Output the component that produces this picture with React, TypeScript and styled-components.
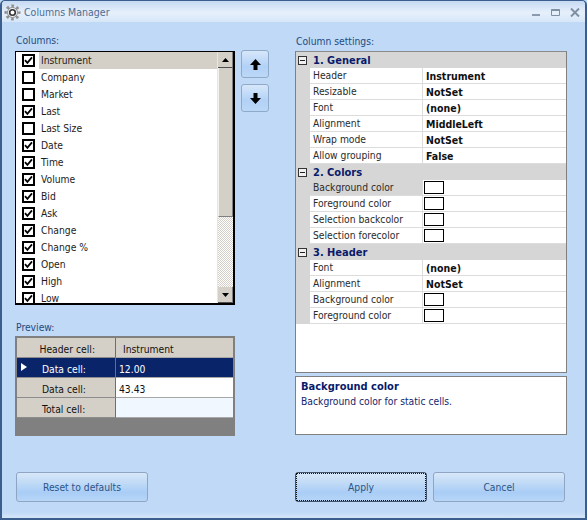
import styled, { createGlobalStyle } from 'styled-components';

const GlobalStyle = createGlobalStyle`
  html, body {
    margin: 0;
    padding: 0;
    background: #bfd9f6;
  }
  * {
    box-sizing: border-box;
  }
`;

const Window = styled.div`
  width: 587px;
  height: 520px;
  display: flex;
  flex-direction: column;
  overflow: hidden;
  background: #bfd9f6;
  border: 1px solid #3a5f8f;
  border-width: 1px 2px 2px 2px;
  border-radius: 5px 5px 0 0;
  font-family: 'DejaVu Sans Condensed', 'Liberation Sans', Arial, sans-serif;
  font-stretch: condensed;
  font-size: 10.25px;
  color: #000;
`;

const TitleBar = styled.div`
  height: 21px;
  flex: none;
  display: flex;
  align-items: center;
  padding: 1px 4px 0 2px;
  gap: 3px;
  background: linear-gradient(#c6daf2, #e6f0fb 55%, #d6e6f8);
  color: #4c6c92;
  font-size: 10.5px;
`;

const TitleText = styled.span`
  flex: 1;
`;

const WindowButtons = styled.div`
  display: flex;
  align-items: center;
  gap: 10px;
  margin-right: 1px;
`;

const Body = styled.div`
  flex: 1;
  display: grid;
  grid-template-columns: 220px 48px 272px;
  column-gap: 6px;
  grid-template-rows: 402px 1fr;
  padding: 12px 0 0 13px;
  background: linear-gradient(#bfd9f6 calc(100% - 6px), #d5e5f9);
`;

const LeftColumn = styled.div`
  display: flex;
  flex-direction: column;
`;

const RightColumn = styled.div`
  display: flex;
  flex-direction: column;
  padding-top: 1px;
`;

const FieldLabel = styled.div`
  height: 16px;
  padding-left: 1px;
  color: #1f4a80;
  line-height: 13px;
`;

const ColumnsLabel = styled(FieldLabel)`
  height: 17px;
`;

const ListBox = styled.div`
  height: 254px;
  display: flex;
  background: #fff;
  border: 1px solid #000;
  border-width: 1px 2px 2px 1px;
  overflow: hidden;
`;

const ListItems = styled.div`
  flex: 1;
  overflow: hidden;
`;

const ListRow = styled.div`
  height: 17px;
  display: flex;
  align-items: center;
  padding-left: 6px;
`;

const CheckBox = styled.span`
  width: 13px;
  height: 13px;
  flex: none;
  border: 2px solid #000;
  display: flex;
  align-items: center;
  justify-content: center;
  background: #fff;
`;

const ListLabel = styled.span<{ $selected?: boolean }>`
  flex: 1;
  height: 17px;
  line-height: 17px;
  margin-left: 4px;
  padding-left: 2px;
  color: #1c1c1c;
  background: ${(p) => (p.$selected ? '#d4d0c8' : 'transparent')};
`;

const ScrollBar = styled.div`
  width: 16px;
  flex: none;
  display: flex;
  flex-direction: column;
  border-left: 1px solid #e8e6e0;
`;

const ScrollButton = styled.div`
  height: 16px;
  flex: none;
  display: flex;
  align-items: center;
  justify-content: center;
  background: #d4d0c8;
  border-right: 1px solid #808080;
  border-bottom: 1px solid #505050;
`;

const ScrollThumb = styled.div`
  height: 149px;
  flex: none;
  background: #d4d0c8;
  border-left: 1px solid #f4f3ef;
  border-right: 1px solid #808080;
  border-bottom: 1px solid #808080;
`;

const ScrollTrack = styled.div`
  flex: 1;
  background: repeating-conic-gradient(#d4d0c8 0 25%, #ffffff 0 50%) 0 0 / 2px 2px;
`;

const PreviewLabel = styled(FieldLabel)`
  margin-top: 15px;
  height: 16px;
  line-height: 14px;
`;

const PreviewGrid = styled.div`
  height: 100px;
  background: #808080;
  padding: 2px 2px 0 2px;
`;

const PreviewRow = styled.div`
  display: grid;
  grid-template-columns: 99px 1fr;
  height: 20px;
`;

const RowHead = styled.div<{ $active?: boolean; $center?: boolean }>`
  position: relative;
  display: flex;
  align-items: center;
  justify-content: ${(p) => (p.$center ? 'flex-end' : 'flex-start')};
  padding: ${(p) => (p.$center ? '2px 20px 0 0' : '2px 0 0 25px')};
  background: ${(p) => (p.$active ? '#0a246a' : '#d4d0c8')};
  color: ${(p) => (p.$active ? '#fff' : '#111')};
  border-right: 1px solid #6e6e6e;
  border-bottom: 1px solid #8c8c8c;
`;

const RowPointer = styled.span`
  position: absolute;
  left: 4px;
  top: 5px;
  width: 0;
  height: 0;
  border-left: 6px solid #fff;
  border-top: 4.5px solid transparent;
  border-bottom: 4.5px solid transparent;
`;

const RowValue = styled.div<{ $bg: string; $fg?: string; $header?: boolean }>`
  display: flex;
  align-items: center;
  padding: 2px 0 0 ${(p) => (p.$header ? '7px' : '3px')};
  background: ${(p) => p.$bg};
  color: ${(p) => p.$fg ?? '#111'};
  border-bottom: 1px solid #a8a8a8;
`;

const ArrowColumn = styled.div`
  display: flex;
  flex-direction: column;
  align-items: flex-start;
  gap: 6px;
  padding-top: 16px;
`;

const ArrowButton = styled.button`
  width: 28px;
  height: 28px;
  padding: 0;
  display: flex;
  align-items: center;
  justify-content: center;
  border: 1px solid #8fa9c8;
  border-radius: 3px;
  background: linear-gradient(#d7e7fa, #b2d1f6 60%, #bcd8f7);
`;

const PropertyGrid = styled.div`
  height: 322px;
  background: #fff;
  border: 1px solid #808080;
  border-top-color: #8a8a8a;
`;

const Category = styled.div`
  height: 16px;
  display: flex;
  align-items: center;
  background: #d6d6d6;
  color: #0a1a6a;
  font-weight: 700;
  font-size: 11px;
`;

const Expander = styled.span`
  position: relative;
  width: 9px;
  height: 9px;
  flex: none;
  margin: 0 6px 0 2px;
  border: 1px solid #333;
  background: #f0f0f0;
  &::after {
    content: '';
    position: absolute;
    left: 1px;
    right: 1px;
    top: 3px;
    height: 1px;
    background: #222;
  }
`;

const PropertyRow = styled.div`
  height: 16px;
  display: grid;
  grid-template-columns: 14px 113px 1fr;
`;

const Gutter = styled.span`
  background: #d6d6d6;
`;

const PropertyName = styled.span<{ $selected?: boolean }>`
  padding-left: 3px;
  line-height: 15px;
  color: #2a2a2a;
  background: ${(p) => (p.$selected ? '#d6d6d6' : '#fff')};
  border-bottom: 1px solid #dcdcdc;
  border-right: 1px solid #dcdcdc;
`;

const PropertyValue = styled.span`
  display: flex;
  align-items: center;
  padding-left: 3px;
  font-weight: 700;
  font-size: 10.5px;
  color: #101010;
  border-bottom: 1px solid #dcdcdc;
`;

const ColorSwatch = styled.span`
  width: 20px;
  height: 13px;
  margin-left: -2px;
  border: 1px solid #000;
  background: #fff;
`;

const HelpPanel = styled.div`
  height: 59px;
  margin-top: 3px;
  padding: 2px 5px;
  background: #fff;
  border: 1px solid #808080;
  line-height: 15px;
`;

const HelpTitle = styled.div`
  font-weight: 700;
  font-size: 11px;
  color: #0a1a6a;
`;

const HelpText = styled.div`
  color: #14246e;
`;

const LeftFooter = styled.div`
  padding: 36px 0 0 1px;
`;

const Footer = styled.div`
  display: flex;
  gap: 6px;
  padding-top: 36px;
`;

const DialogButton = styled.button<{ $focused?: boolean }>`
  position: relative;
  width: 132px;
  height: 30px;
  padding: 0;
  font-family: inherit;
  font-stretch: inherit;
  font-size: 10.25px;
  color: #2a5488;
  border: 1px solid ${(p) => (p.$focused ? '#44546a' : '#8ea6c4')};
  border-radius: 3px;
  background: linear-gradient(#d8e7f9, #c4dcf6 30%, #a9cdf6 70%, #b8d6f7);
  &::after {
    content: '';
    display: ${(p) => (p.$focused ? 'block' : 'none')};
    position: absolute;
    inset: 0;
    border: 1px dotted #111;
  }
`;

const Gear = () => (
  <svg width="17" height="17" viewBox="0 0 17 17" fill="none">
    <circle cx="8.5" cy="8.5" r="6.6" stroke="#8f8f8f" strokeWidth="2.8" strokeDasharray="2.6 2.58" strokeDashoffset="1.3" />
    <circle cx="8.5" cy="8.5" r="5" fill="#eef3fa" stroke="#8a8a8a" />
    <circle cx="8.5" cy="8.5" r="2.8" fill="#fff" stroke="#333" strokeWidth="1.6" />
  </svg>
);

const MinimizeIcon = () => (
  <svg width="9" height="9" viewBox="0 0 9 9">
    <rect x="0" y="6" width="8" height="2" fill="#8a9bb0" />
  </svg>
);

const MaximizeIcon = () => (
  <svg width="9" height="9" viewBox="0 0 9 9" fill="none" stroke="#7f90a5">
    <path d="M.5 1.5h8v6h-8z" />
    <path d="M.5 2h8" strokeWidth="2" />
  </svg>
);

const CloseIcon = () => (
  <svg width="10" height="9" viewBox="0 0 10 9" fill="none" stroke="#7f90a5" strokeWidth="2">
    <path d="M1 .5l8 8M9 .5l-8 8" />
  </svg>
);

const CheckMark = () => (
  <svg width="9" height="9" viewBox="0 0 9 9" fill="none" stroke="#000" strokeWidth="1.8">
    <path d="M1 4.2l2.4 2.6L8 1.4" />
  </svg>
);

const UpTriangle = () => (
  <svg width="7" height="4" viewBox="0 0 7 4">
    <path d="M3.5 0L7 4H0z" fill="#000" />
  </svg>
);

const DownTriangle = () => (
  <svg width="7" height="4" viewBox="0 0 7 4">
    <path d="M0 0h7L3.5 4z" fill="#000" />
  </svg>
);

const MoveUpIcon = () => (
  <svg width="11" height="11" viewBox="0 0 11 11">
    <path d="M5.5 0L11 6H7.5v5h-4V6H0z" fill="#000" />
  </svg>
);

const MoveDownIcon = () => (
  <svg width="11" height="11" viewBox="0 0 11 11">
    <path d="M3.5 0h4v5H11l-5.5 6L0 5h3.5z" fill="#000" />
  </svg>
);

const columns = [
  { name: 'Instrument', checked: true },
  { name: 'Company', checked: false },
  { name: 'Market', checked: false },
  { name: 'Last', checked: true },
  { name: 'Last Size', checked: false },
  { name: 'Date', checked: true },
  { name: 'Time', checked: true },
  { name: 'Volume', checked: true },
  { name: 'Bid', checked: true },
  { name: 'Ask', checked: true },
  { name: 'Change', checked: true },
  { name: 'Change %', checked: true },
  { name: 'Open', checked: true },
  { name: 'High', checked: true },
  { name: 'Low', checked: true },
];

type Prop = { name: string; value?: string; selected?: boolean };

const settings: { title: string; props: Prop[] }[] = [
  {
    title: '1. General',
    props: [
      { name: 'Header', value: 'Instrument' },
      { name: 'Resizable', value: 'NotSet' },
      { name: 'Font', value: '(none)' },
      { name: 'Alignment', value: 'MiddleLeft' },
      { name: 'Wrap mode', value: 'NotSet' },
      { name: 'Allow grouping', value: 'False' },
    ],
  },
  {
    title: '2. Colors',
    props: [
      { name: 'Background color', selected: true },
      { name: 'Foreground color' },
      { name: 'Selection backcolor' },
      { name: 'Selection forecolor' },
    ],
  },
  {
    title: '3. Header',
    props: [
      { name: 'Font', value: '(none)' },
      { name: 'Alignment', value: 'NotSet' },
      { name: 'Background color' },
      { name: 'Foreground color' },
    ],
  },
];

export default function App() {
  return (
    <Window>
      <GlobalStyle />
      <TitleBar>
        <Gear />
        <TitleText>Columns Manager</TitleText>
        <WindowButtons>
          <MinimizeIcon />
          <MaximizeIcon />
          <CloseIcon />
        </WindowButtons>
      </TitleBar>
      <Body>
        <LeftColumn>
          <ColumnsLabel>Columns:</ColumnsLabel>
          <ListBox>
            <ListItems>
              {columns.map((c, i) => (
                <ListRow key={c.name}>
                  <CheckBox>{c.checked && <CheckMark />}</CheckBox>
                  <ListLabel $selected={i === 0}>{c.name}</ListLabel>
                </ListRow>
              ))}
            </ListItems>
            <ScrollBar>
              <ScrollButton>
                <UpTriangle />
              </ScrollButton>
              <ScrollThumb />
              <ScrollTrack />
              <ScrollButton>
                <DownTriangle />
              </ScrollButton>
            </ScrollBar>
          </ListBox>
          <PreviewLabel>Preview:</PreviewLabel>
          <PreviewGrid>
            <PreviewRow>
              <RowHead $center>Header cell:</RowHead>
              <RowValue $bg="#d4d0c8" $header>
                Instrument
              </RowValue>
            </PreviewRow>
            <PreviewRow>
              <RowHead $active>
                <RowPointer />
                Data cell:
              </RowHead>
              <RowValue $bg="#0a246a" $fg="#fff">
                12.00
              </RowValue>
            </PreviewRow>
            <PreviewRow>
              <RowHead>Data cell:</RowHead>
              <RowValue $bg="#fff">43.43</RowValue>
            </PreviewRow>
            <PreviewRow>
              <RowHead>Total cell:</RowHead>
              <RowValue $bg="#f0f7fe" />
            </PreviewRow>
          </PreviewGrid>
        </LeftColumn>
        <ArrowColumn>
          <ArrowButton aria-label="Move up">
            <MoveUpIcon />
          </ArrowButton>
          <ArrowButton aria-label="Move down">
            <MoveDownIcon />
          </ArrowButton>
        </ArrowColumn>
        <RightColumn>
          <FieldLabel>Column settings:</FieldLabel>
          <PropertyGrid>
            {settings.map((group) => (
              <div key={group.title}>
                <Category>
                  <Expander />
                  {group.title}
                </Category>
                {group.props.map((prop) => (
                  <PropertyRow key={prop.name}>
                    <Gutter />
                    <PropertyName $selected={prop.selected}>{prop.name}</PropertyName>
                    <PropertyValue>{prop.value ?? <ColorSwatch />}</PropertyValue>
                  </PropertyRow>
                ))}
              </div>
            ))}
          </PropertyGrid>
          <HelpPanel>
            <HelpTitle>Background color</HelpTitle>
            <HelpText>Background color for static cells.</HelpText>
          </HelpPanel>
        </RightColumn>
        <LeftFooter>
          <DialogButton>Reset to defaults</DialogButton>
        </LeftFooter>
        <div />
        <Footer>
          <DialogButton $focused>Apply</DialogButton>
          <DialogButton>Cancel</DialogButton>
        </Footer>
      </Body>
    </Window>
  );
}
